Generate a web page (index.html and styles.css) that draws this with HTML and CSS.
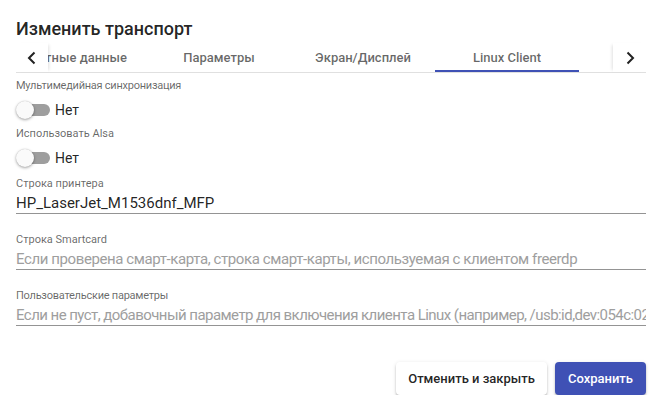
FILE: index.html
```html
<!DOCTYPE html>
<html lang="ru">

<head>
    <meta charset="UTF-8">
    <meta name="viewport" content="width=device-width, initial-scale=1.0">
    <title>Изменить транспорт</title>
    <link rel="stylesheet" href="styles.css">
</head>

<body>
    <div class="dialog">
        <h2 class="dialog-title">Изменить транспорт</h2>

        <div class="tab-header">
            <div class="tab-pager pager-left">
                <svg width="14" height="14" viewBox="0 0 14 14"><path d="M9.5 1.5 L4 7 L9.5 12.5" fill="none" stroke="#222" stroke-width="2"/></svg>
            </div>
            <div class="tab-window">
                <ul class="tab-list">
                    <li class="tab">Учетные данные</li>
                    <li class="tab">Параметры</li>
                    <li class="tab">Экран/Дисплей</li>
                    <li class="tab active">Linux Client</li>
                </ul>
            </div>
            <div class="tab-pager pager-right">
                <svg width="14" height="14" viewBox="0 0 14 14"><path d="M4.5 1.5 L10 7 L4.5 12.5" fill="none" stroke="#222" stroke-width="2"/></svg>
            </div>
        </div>

        <div class="tab-body">
            <div class="field-label tight">Мультимедийная синхронизация</div>
            <div class="toggle-row">
                <span class="toggle"><span class="thumb"></span></span>
                <span class="toggle-text">Нет</span>
            </div>

            <div class="field-label">Использовать Alsa</div>
            <div class="toggle-row">
                <span class="toggle"><span class="thumb"></span></span>
                <span class="toggle-text">Нет</span>
            </div>

            <div class="input-field">
                <div class="field-label">Строка принтера</div>
                <div class="input-line">HP_LaserJet_M1536dnf_MFP</div>
            </div>

            <div class="input-field">
                <div class="field-label">Строка Smartcard</div>
                <div class="input-line placeholder">Если проверена смарт-карта, строка смарт-карты, используемая с клиентом freerdp</div>
            </div>

            <div class="input-field">
                <div class="field-label tight">Пользовательские параметры</div>
                <div class="input-line placeholder narrow">Если не пуст, добавочный параметр для включения клиента Linux (например, /usb:id,dev:054c:0268)</div>
            </div>
        </div>

        <div class="dialog-actions">
            <button class="btn btn-cancel">Отменить и закрыть</button>
            <button class="btn btn-save">Сохранить</button>
        </div>
    </div>
</body>

</html>
```

FILE: styles.css
```css
* {
    margin: 0;
    padding: 0;
    box-sizing: border-box;
}

li {
    list-style: none;
}

body {
    background-color: #fff;
    font-family: Roboto, "Liberation Sans", sans-serif;
    color: rgba(0, 0, 0, .87);
}

.dialog {
    width: 666px;
    padding: 17px 20px 0 16px;
}

.dialog-title {
    font-size: 18px;
    line-height: 24px;
    font-weight: 500;
}

/* tabs */
.tab-header {
    display: flex;
    margin-top: 2px;
    height: 30px;
    border-bottom: 1px solid #e0e0e0;
}

.tab-pager {
    width: 32px;
    flex: none;
    display: flex;
    align-items: center;
    justify-content: center;
    background-color: #fff;
    position: relative;
    z-index: 1;
}

.pager-left {
    box-shadow: 3px 0 3px -2px rgba(0, 0, 0, .12);
}

.pager-right {
    width: 33px;
    box-shadow: -3px 0 3px -2px rgba(0, 0, 0, .12);
}

.tab-window {
    flex: 1;
    overflow: hidden;
}

.tab-list {
    display: flex;
    margin-left: -45px;
    height: 100%;
}

.tab {
    flex: none;
    width: 144px;
    height: 100%;
    display: flex;
    align-items: center;
    justify-content: center;
    font-size: 13px;
    font-weight: 500;
    color: rgba(0, 0, 0, .6);
    white-space: nowrap;
}

.tab.active {
    border-bottom: 2px solid #3f51b5;
    padding-top: 2px;
}

/* content */
.tab-body {
    padding-top: 5px;
}

.field-label {
    font-size: 11px;
    line-height: 16px;
    color: rgba(0, 0, 0, .6);
}

.field-label.tight {
    letter-spacing: -0.25px;
}

.toggle-row {
    display: flex;
    align-items: center;
    height: 32px;
}

.toggle {
    width: 32px;
    height: 12px;
    margin-left: 2px;
    border-radius: 6px;
    background-color: #9e9e9e;
    display: flex;
    align-items: center;
}

.thumb {
    width: 18px;
    height: 18px;
    margin-left: -2px;
    border-radius: 50%;
    background-color: #fafafa;
    box-shadow: 0 1px 3px rgba(0, 0, 0, .35), 0 0 1px rgba(0, 0, 0, .2);
}

.toggle-text {
    margin-left: 5px;
    font-size: 14px;
}

.input-field {
    margin-top: 2px;
}

.input-field + .input-field {
    margin-top: 18px;
}

.input-line {
    font-size: 15px;
    line-height: 20px;
    margin-top: 1px;
    border-bottom: 1px solid #949494;
    white-space: nowrap;
    overflow: hidden;
    color: rgba(0, 0, 0, .87);
}

.input-line.placeholder {
    color: #9e9e9e;
    letter-spacing: -0.4px;
}

.input-line.narrow {
    letter-spacing: -0.55px;
}

/* buttons */
.dialog-actions {
    display: flex;
    justify-content: flex-end;
    gap: 8px;
    margin-top: 36px;
}

.btn {
    height: 33px;
    padding: 0 12px;
    border: none;
    border-radius: 4px;
    font-family: Roboto, "Liberation Sans", sans-serif;
    font-size: 13px;
    font-weight: 500;
}

.btn-cancel {
    background-color: #fff;
    color: rgba(0, 0, 0, .87);
    box-shadow: 0 2px 2px rgba(0, 0, 0, .2), 0 1px 4px rgba(0, 0, 0, .12);
}

.btn-save {
    padding: 0 13px;
    background-color: #3f51b5;
    color: #fff;
    box-shadow: 0 2px 2px rgba(0, 0, 0, .2), 0 1px 4px rgba(0, 0, 0, .12);
}
```
